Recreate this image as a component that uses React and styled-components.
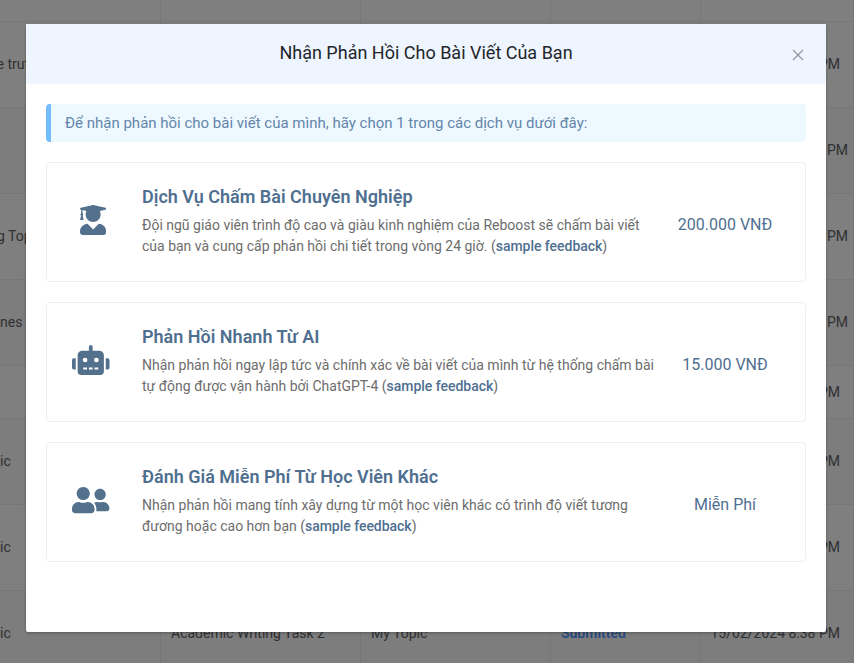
import React from "react";
import styled, { createGlobalStyle } from "styled-components";
import { FaUserGraduate, FaRobot, FaUserFriends } from "react-icons/fa";

const GlobalStyle = createGlobalStyle`
  * { box-sizing: border-box; }
  html, body { margin: 0; padding: 0; overflow: hidden; }
  body { font-family: Roboto, "Liberation Sans", sans-serif; }
`;

const Screen = styled.div`
  position: relative;
  width: 854px;
  height: 663px;
  overflow: hidden;
  background: #fff;
`;

const Table = styled.div`
  display: flex;
  flex-direction: column;
`;

const Row = styled.div`
  display: grid;
  grid-template-columns: 161px 200px 190px 150px 153px;
  flex: none;
  height: ${(p) => p.$height}px;
  background: ${(p) => (p.$striped ? "#fafafa" : "#fff")};
`;

const Cell = styled.div`
  display: flex;
  align-items: center;
  justify-content: ${(p) => (p.$end ? "flex-end" : "flex-start")};
  padding: 0 ${(p) => p.$trail ?? 10}px 1px ${(p) => p.$lead ?? 10}px;
  border-right: 1px solid #ebeef5;
  border-bottom: 1px solid #ebeef5;
  font-size: 14px;
  line-height: 20px;
  color: #606266;
  white-space: nowrap;
`;

const Topic = styled.span`
  margin-left: ${(p) => p.$shift ?? 0}px;
`;

const Status = styled.span`
  font-weight: 600;
  color: #5096ff;
`;

const Overlay = styled.div`
  position: absolute;
  inset: 0;
  padding: 24px 28px 0 26px;
  background: rgba(0, 0, 0, 0.5);
`;

const Dialog = styled.section`
  width: 800px;
  height: 608px;
  border-radius: 2px;
  background: #fff;
  box-shadow: 0 1px 3px rgba(0, 0, 0, 0.3);
`;

const Header = styled.header`
  display: grid;
  grid-template-columns: 56px 1fr 56px;
  align-items: center;
  height: 60px;
  background: #eef5ff;
`;

const Title = styled.h1`
  grid-column: 2;
  margin: 0;
  padding-bottom: 2px;
  font-size: 18px;
  line-height: 24px;
  font-weight: 400;
  text-align: center;
  color: #212529;
`;

const CloseButton = styled.button`
  display: flex;
  justify-content: center;
  padding: 1px 0 0;
  border: 0;
  background: none;
  color: #909399;
`;

const Body = styled.div`
  display: flex;
  flex-direction: column;
  gap: 20px;
  padding: 20px;
`;

const Notice = styled.div`
  height: 38px;
  padding-left: 14px;
  border-left: 5px solid #72bcff;
  border-radius: 4px;
  background: #eef9ff;
  font-size: 15px;
  line-height: 38px;
  color: #6485aa;
`;

const Card = styled.article`
  display: grid;
  grid-template-columns: 88px 521px 1fr;
  align-items: center;
  height: 120px;
  padding: 0 11px 0 0;
  border: 1px solid #ebeef5;
  border-radius: 4px;
`;

const IconBox = styled.div`
  display: flex;
  justify-content: center;
  padding: 0 0 5px ${(p) => p.$indent ?? 0}px;
  color: #53708d;

  svg {
    flex: none;
    width: ${(p) => p.$width}px;
    height: 30px;
  }
`;

const Details = styled.div`
  padding: 0 0 3px 7px;
  white-space: nowrap;
`;

const CardTitle = styled.h2`
  margin: 0 0 5px;
  font-size: 18px;
  line-height: 26px;
  font-weight: 600;
  color: #4f6f90;
`;

const Description = styled.p`
  margin: 0;
  font-size: 14px;
  line-height: 21px;
  color: #6d6d6d;
`;

const Link = styled.span`
  font-weight: 500;
  letter-spacing: -0.03px;
  color: #4f6f90;
`;

const Price = styled.div`
  margin-top: 6px;
  font-size: 16px;
  line-height: 24px;
  text-align: center;
  color: #4f6f90;
`;

const rows = [
  { height: 22 },
  { height: 86, topic: "e truth", shift: -3.5, time: "8:38 PM", trail: 13 },
  { height: 86, time: "10:38 PM", trail: 5, striped: true },
  { height: 86, topic: "g Topic", shift: -3, time: "10:38 PM", trail: 5 },
  { height: 86, topic: "nes", time: "10:38 PM", trail: 5, striped: true },
  { height: 53, time: "8:38 PM", trail: 13 },
  { height: 86, topic: "ic", time: "8:38 PM", trail: 13, striped: true },
  { height: 86, topic: "ic", time: "8:38 PM", trail: 13 },
  {
    height: 86,
    topic: "ic",
    task: "Academic Writing Task 2",
    name: "My Topic",
    status: "Submitted",
    time: "15/02/2024 8:38 PM",
    trail: 13,
    striped: true,
  },
];

const services = [
  {
    icon: FaUserGraduate,
    iconWidth: 26.25,
    iconIndent: 4,
    title: "Dịch Vụ Chấm Bài Chuyên Nghiệp",
    lines: [
      "Đội ngũ giáo viên trình độ cao và giàu kinh nghiệm của Reboost sẽ chấm bài viết",
      "của bạn và cung cấp phản hồi chi tiết trong vòng 24 giờ. (",
    ],
    price: "200.000 VNĐ",
  },
  {
    icon: FaRobot,
    iconWidth: 37.5,
    title: "Phản Hồi Nhanh Từ AI",
    lines: [
      "Nhận phản hồi ngay lập tức và chính xác về bài viết của mình từ hệ thống chấm bài",
      "tự động được vận hành bởi ChatGPT-4 (",
    ],
    price: "15.000 VNĐ",
  },
  {
    icon: FaUserFriends,
    iconWidth: 37.5,
    title: "Đánh Giá Miễn Phí Từ Học Viên Khác",
    lines: [
      "Nhận phản hồi mang tính xây dựng từ một học viên khác có trình độ viết tương",
      "đương hoặc cao hơn bạn (",
    ],
    price: "Miễn Phí",
  },
];

function SubmissionTable() {
  return (
    <Table>
      {rows.map((row, i) => (
        <Row key={i} $height={row.height} $striped={row.striped}>
          <Cell $lead={0}><Topic $shift={row.shift}>{row.topic}</Topic></Cell>
          <Cell>{row.task}</Cell>
          <Cell>{row.name}</Cell>
          <Cell><Status>{row.status}</Status></Cell>
          <Cell $end $trail={row.trail}>{row.time}</Cell>
        </Row>
      ))}
    </Table>
  );
}

function ServiceCard({ service }) {
  const Icon = service.icon;
  return (
    <Card>
      <IconBox $width={service.iconWidth} $indent={service.iconIndent}><Icon /></IconBox>
      <Details>
        <CardTitle>{service.title}</CardTitle>
        <Description>
          {service.lines[0]}
          <br />
          {service.lines[1]}
          <Link>sample feedback</Link>)
        </Description>
      </Details>
      <Price>{service.price}</Price>
    </Card>
  );
}

export default function App() {
  return (
    <>
      <GlobalStyle />
      <Screen>
        <SubmissionTable />
        <Overlay>
          <Dialog>
            <Header>
              <Title>Nhận Phản Hồi Cho Bài Viết Của Bạn</Title>
              <CloseButton aria-label="Close">
                <svg width="12" height="12" viewBox="0 0 12 12" fill="none" stroke="currentColor" strokeWidth="1.1">
                  <path d="M1 1L11 11M11 1L1 11" />
                </svg>
              </CloseButton>
            </Header>
            <Body>
              <Notice>Để nhận phản hồi cho bài viết của mình, hãy chọn 1 trong các dịch vụ dưới đây:</Notice>
              {services.map((service) => (
                <ServiceCard key={service.title} service={service} />
              ))}
            </Body>
          </Dialog>
        </Overlay>
      </Screen>
    </>
  );
}
